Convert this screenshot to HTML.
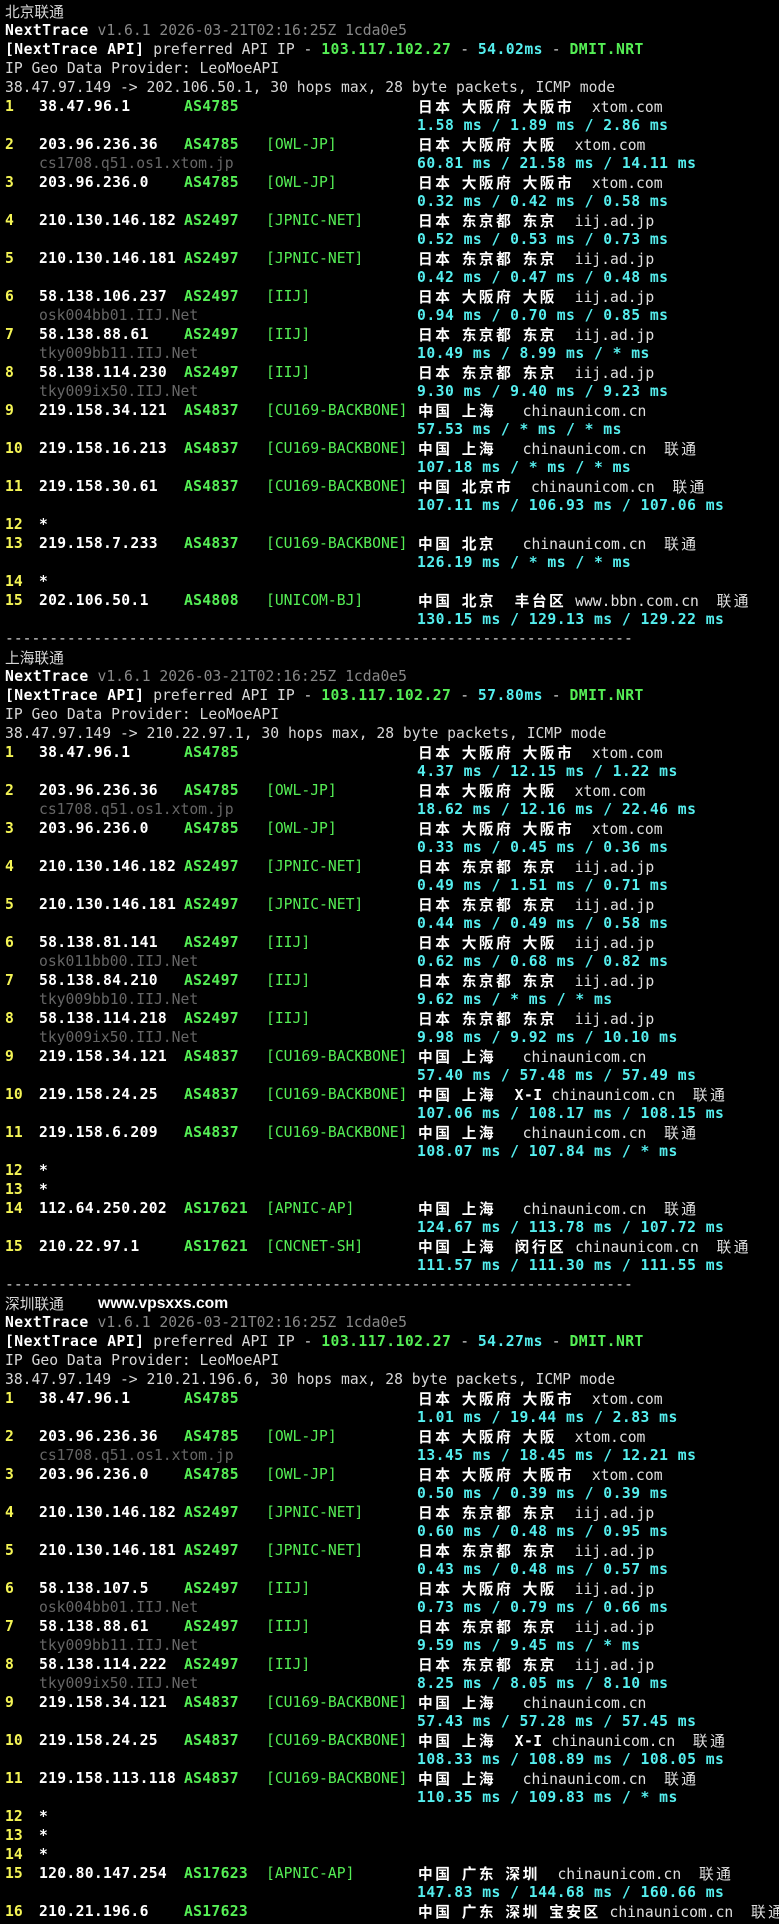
<!DOCTYPE html>
<html><head><meta charset="utf-8">
<style>
html,body{margin:0;padding:0;background:#000;}
#w{position:relative;width:779px;height:1924px;overflow:hidden;background:#000;padding-top:1.5px;box-sizing:border-box;
font-family:"DejaVu Sans Mono","Liberation Mono",monospace;font-size:14.7px;color:#d8d8d8;}
.l{position:relative;height:19px;line-height:19px;white-space:pre;}
.l span{position:absolute;top:0;white-space:pre;}
.x{left:5px;}
b{font-weight:bold;letter-spacing:.45px;color:#fff;}
i{font-style:normal;font-family:"Noto Sans CJK SC","WenQuanYi Zen Hei",sans-serif;letter-spacing:2.5px;}
.n{left:5px;color:#f4f455;font-weight:bold;}
.ip{left:39px;color:#fff;font-weight:bold;letter-spacing:.3px;}
.as{left:184px;color:#55ee55;font-weight:bold;letter-spacing:.3px;}
.t{left:266px;color:#55ee55;}
.r{left:418px;color:#e0e0e0;}
.m{left:417px;color:#55eeee;font-weight:bold;letter-spacing:.47px;}
.h{left:39px;color:#666;}
.g{color:#888;}
.gr{color:#55ee55;font-weight:bold;letter-spacing:.45px;}
.cy{color:#55eeee;font-weight:bold;letter-spacing:.45px;}
.ti{font-family:"Noto Sans CJK SC","WenQuanYi Zen Hei",sans-serif;color:#d8d8d8;}
.vp{font-family:"Liberation Sans",sans-serif;font-weight:bold;font-size:15.7px;color:#fff;}
</style></head><body><div id="w">

<div class="l"><span class="x ti">北京联通</span></div>
<div class="l"><span class="x"><b>NextTrace</b><span class="g" style="position:static"> v1.6.1 2026-03-21T02:16:25Z 1cda0e5</span></span></div>
<div class="l"><span class="x"><b>[NextTrace API]</b> preferred API IP - <span class="gr" style="position:static">103.117.102.27</span> - <span class="cy" style="position:static">54.02ms</span> - <span class="gr" style="position:static">DMIT.NRT</span></span></div>
<div class="l"><span class="x">IP Geo Data Provider: LeoMoeAPI</span></div>
<div class="l"><span class="x">38.47.97.149 -&gt; 202.106.50.1, 30 hops max, 28 byte packets, ICMP mode</span></div>
<div class="l"><span class="n">1</span><span class="ip">38.47.96.1</span><span class="as">AS4785</span><span class="r"><b><i>日本</i> <i>大阪府</i> <i>大阪市</i></b>  xtom.com</span></div>
<div class="l"><span class="m">1.58 ms / 1.89 ms / 2.86 ms</span></div>
<div class="l"><span class="n">2</span><span class="ip">203.96.236.36</span><span class="as">AS4785</span><span class="t">[OWL-JP]</span><span class="r"><b><i>日本</i> <i>大阪府</i> <i>大阪</i></b>  xtom.com</span></div>
<div class="l"><span class="h">cs1708.q51.os1.xtom.jp</span><span class="m">60.81 ms / 21.58 ms / 14.11 ms</span></div>
<div class="l"><span class="n">3</span><span class="ip">203.96.236.0</span><span class="as">AS4785</span><span class="t">[OWL-JP]</span><span class="r"><b><i>日本</i> <i>大阪府</i> <i>大阪市</i></b>  xtom.com</span></div>
<div class="l"><span class="m">0.32 ms / 0.42 ms / 0.58 ms</span></div>
<div class="l"><span class="n">4</span><span class="ip">210.130.146.182</span><span class="as">AS2497</span><span class="t">[JPNIC-NET]</span><span class="r"><b><i>日本</i> <i>东京都</i> <i>东京</i></b>  iij.ad.jp</span></div>
<div class="l"><span class="m">0.52 ms / 0.53 ms / 0.73 ms</span></div>
<div class="l"><span class="n">5</span><span class="ip">210.130.146.181</span><span class="as">AS2497</span><span class="t">[JPNIC-NET]</span><span class="r"><b><i>日本</i> <i>东京都</i> <i>东京</i></b>  iij.ad.jp</span></div>
<div class="l"><span class="m">0.42 ms / 0.47 ms / 0.48 ms</span></div>
<div class="l"><span class="n">6</span><span class="ip">58.138.106.237</span><span class="as">AS2497</span><span class="t">[IIJ]</span><span class="r"><b><i>日本</i> <i>大阪府</i> <i>大阪</i></b>  iij.ad.jp</span></div>
<div class="l"><span class="h">osk004bb01.IIJ.Net</span><span class="m">0.94 ms / 0.70 ms / 0.85 ms</span></div>
<div class="l"><span class="n">7</span><span class="ip">58.138.88.61</span><span class="as">AS2497</span><span class="t">[IIJ]</span><span class="r"><b><i>日本</i> <i>东京都</i> <i>东京</i></b>  iij.ad.jp</span></div>
<div class="l"><span class="h">tky009bb11.IIJ.Net</span><span class="m">10.49 ms / 8.99 ms / * ms</span></div>
<div class="l"><span class="n">8</span><span class="ip">58.138.114.230</span><span class="as">AS2497</span><span class="t">[IIJ]</span><span class="r"><b><i>日本</i> <i>东京都</i> <i>东京</i></b>  iij.ad.jp</span></div>
<div class="l"><span class="h">tky009ix50.IIJ.Net</span><span class="m">9.30 ms / 9.40 ms / 9.23 ms</span></div>
<div class="l"><span class="n">9</span><span class="ip">219.158.34.121</span><span class="as">AS4837</span><span class="t">[CU169-BACKBONE]</span><span class="r"><b><i>中国</i> <i>上海</i></b>   chinaunicom.cn</span></div>
<div class="l"><span class="m">57.53 ms / * ms / * ms</span></div>
<div class="l"><span class="n">10</span><span class="ip">219.158.16.213</span><span class="as">AS4837</span><span class="t">[CU169-BACKBONE]</span><span class="r"><b><i>中国</i> <i>上海</i></b>   chinaunicom.cn  <i>联通</i></span></div>
<div class="l"><span class="m">107.18 ms / * ms / * ms</span></div>
<div class="l"><span class="n">11</span><span class="ip">219.158.30.61</span><span class="as">AS4837</span><span class="t">[CU169-BACKBONE]</span><span class="r"><b><i>中国</i> <i>北京市</i></b>  chinaunicom.cn  <i>联通</i></span></div>
<div class="l"><span class="m">107.11 ms / 106.93 ms / 107.06 ms</span></div>
<div class="l"><span class="n">12</span><span class="ip">*</span></div>
<div class="l"><span class="n">13</span><span class="ip">219.158.7.233</span><span class="as">AS4837</span><span class="t">[CU169-BACKBONE]</span><span class="r"><b><i>中国</i> <i>北京</i></b>   chinaunicom.cn  <i>联通</i></span></div>
<div class="l"><span class="m">126.19 ms / * ms / * ms</span></div>
<div class="l"><span class="n">14</span><span class="ip">*</span></div>
<div class="l"><span class="n">15</span><span class="ip">202.106.50.1</span><span class="as">AS4808</span><span class="t">[UNICOM-BJ]</span><span class="r"><b><i>中国</i> <i>北京</i>  <i>丰台区</i></b> www.bbn.com.cn  <i>联通</i></span></div>
<div class="l"><span class="m">130.15 ms / 129.13 ms / 129.22 ms</span></div>
<div class="l"><span class="x">-----------------------------------------------------------------------</span></div>

<div class="l"><span class="x ti">上海联通</span></div>
<div class="l"><span class="x"><b>NextTrace</b><span class="g" style="position:static"> v1.6.1 2026-03-21T02:16:25Z 1cda0e5</span></span></div>
<div class="l"><span class="x"><b>[NextTrace API]</b> preferred API IP - <span class="gr" style="position:static">103.117.102.27</span> - <span class="cy" style="position:static">57.80ms</span> - <span class="gr" style="position:static">DMIT.NRT</span></span></div>
<div class="l"><span class="x">IP Geo Data Provider: LeoMoeAPI</span></div>
<div class="l"><span class="x">38.47.97.149 -&gt; 210.22.97.1, 30 hops max, 28 byte packets, ICMP mode</span></div>
<div class="l"><span class="n">1</span><span class="ip">38.47.96.1</span><span class="as">AS4785</span><span class="r"><b><i>日本</i> <i>大阪府</i> <i>大阪市</i></b>  xtom.com</span></div>
<div class="l"><span class="m">4.37 ms / 12.15 ms / 1.22 ms</span></div>
<div class="l"><span class="n">2</span><span class="ip">203.96.236.36</span><span class="as">AS4785</span><span class="t">[OWL-JP]</span><span class="r"><b><i>日本</i> <i>大阪府</i> <i>大阪</i></b>  xtom.com</span></div>
<div class="l"><span class="h">cs1708.q51.os1.xtom.jp</span><span class="m">18.62 ms / 12.16 ms / 22.46 ms</span></div>
<div class="l"><span class="n">3</span><span class="ip">203.96.236.0</span><span class="as">AS4785</span><span class="t">[OWL-JP]</span><span class="r"><b><i>日本</i> <i>大阪府</i> <i>大阪市</i></b>  xtom.com</span></div>
<div class="l"><span class="m">0.33 ms / 0.45 ms / 0.36 ms</span></div>
<div class="l"><span class="n">4</span><span class="ip">210.130.146.182</span><span class="as">AS2497</span><span class="t">[JPNIC-NET]</span><span class="r"><b><i>日本</i> <i>东京都</i> <i>东京</i></b>  iij.ad.jp</span></div>
<div class="l"><span class="m">0.49 ms / 1.51 ms / 0.71 ms</span></div>
<div class="l"><span class="n">5</span><span class="ip">210.130.146.181</span><span class="as">AS2497</span><span class="t">[JPNIC-NET]</span><span class="r"><b><i>日本</i> <i>东京都</i> <i>东京</i></b>  iij.ad.jp</span></div>
<div class="l"><span class="m">0.44 ms / 0.49 ms / 0.58 ms</span></div>
<div class="l"><span class="n">6</span><span class="ip">58.138.81.141</span><span class="as">AS2497</span><span class="t">[IIJ]</span><span class="r"><b><i>日本</i> <i>大阪府</i> <i>大阪</i></b>  iij.ad.jp</span></div>
<div class="l"><span class="h">osk011bb00.IIJ.Net</span><span class="m">0.62 ms / 0.68 ms / 0.82 ms</span></div>
<div class="l"><span class="n">7</span><span class="ip">58.138.84.210</span><span class="as">AS2497</span><span class="t">[IIJ]</span><span class="r"><b><i>日本</i> <i>东京都</i> <i>东京</i></b>  iij.ad.jp</span></div>
<div class="l"><span class="h">tky009bb10.IIJ.Net</span><span class="m">9.62 ms / * ms / * ms</span></div>
<div class="l"><span class="n">8</span><span class="ip">58.138.114.218</span><span class="as">AS2497</span><span class="t">[IIJ]</span><span class="r"><b><i>日本</i> <i>东京都</i> <i>东京</i></b>  iij.ad.jp</span></div>
<div class="l"><span class="h">tky009ix50.IIJ.Net</span><span class="m">9.98 ms / 9.92 ms / 10.10 ms</span></div>
<div class="l"><span class="n">9</span><span class="ip">219.158.34.121</span><span class="as">AS4837</span><span class="t">[CU169-BACKBONE]</span><span class="r"><b><i>中国</i> <i>上海</i></b>   chinaunicom.cn</span></div>
<div class="l"><span class="m">57.40 ms / 57.48 ms / 57.49 ms</span></div>
<div class="l"><span class="n">10</span><span class="ip">219.158.24.25</span><span class="as">AS4837</span><span class="t">[CU169-BACKBONE]</span><span class="r"><b><i>中国</i> <i>上海</i>  X-I</b> chinaunicom.cn  <i>联通</i></span></div>
<div class="l"><span class="m">107.06 ms / 108.17 ms / 108.15 ms</span></div>
<div class="l"><span class="n">11</span><span class="ip">219.158.6.209</span><span class="as">AS4837</span><span class="t">[CU169-BACKBONE]</span><span class="r"><b><i>中国</i> <i>上海</i></b>   chinaunicom.cn  <i>联通</i></span></div>
<div class="l"><span class="m">108.07 ms / 107.84 ms / * ms</span></div>
<div class="l"><span class="n">12</span><span class="ip">*</span></div>
<div class="l"><span class="n">13</span><span class="ip">*</span></div>
<div class="l"><span class="n">14</span><span class="ip">112.64.250.202</span><span class="as">AS17621</span><span class="t">[APNIC-AP]</span><span class="r"><b><i>中国</i> <i>上海</i></b>   chinaunicom.cn  <i>联通</i></span></div>
<div class="l"><span class="m">124.67 ms / 113.78 ms / 107.72 ms</span></div>
<div class="l"><span class="n">15</span><span class="ip">210.22.97.1</span><span class="as">AS17621</span><span class="t">[CNCNET-SH]</span><span class="r"><b><i>中国</i> <i>上海</i>  <i>闵行区</i></b> chinaunicom.cn  <i>联通</i></span></div>
<div class="l"><span class="m">111.57 ms / 111.30 ms / 111.55 ms</span></div>
<div class="l"><span class="x">-----------------------------------------------------------------------</span></div>

<div class="l"><span class="x ti">深圳联通</span><span class="vp" style="left:98px">www.vpsxxs.com</span></div>
<div class="l"><span class="x"><b>NextTrace</b><span class="g" style="position:static"> v1.6.1 2026-03-21T02:16:25Z 1cda0e5</span></span></div>
<div class="l"><span class="x"><b>[NextTrace API]</b> preferred API IP - <span class="gr" style="position:static">103.117.102.27</span> - <span class="cy" style="position:static">54.27ms</span> - <span class="gr" style="position:static">DMIT.NRT</span></span></div>
<div class="l"><span class="x">IP Geo Data Provider: LeoMoeAPI</span></div>
<div class="l"><span class="x">38.47.97.149 -&gt; 210.21.196.6, 30 hops max, 28 byte packets, ICMP mode</span></div>
<div class="l"><span class="n">1</span><span class="ip">38.47.96.1</span><span class="as">AS4785</span><span class="r"><b><i>日本</i> <i>大阪府</i> <i>大阪市</i></b>  xtom.com</span></div>
<div class="l"><span class="m">1.01 ms / 19.44 ms / 2.83 ms</span></div>
<div class="l"><span class="n">2</span><span class="ip">203.96.236.36</span><span class="as">AS4785</span><span class="t">[OWL-JP]</span><span class="r"><b><i>日本</i> <i>大阪府</i> <i>大阪</i></b>  xtom.com</span></div>
<div class="l"><span class="h">cs1708.q51.os1.xtom.jp</span><span class="m">13.45 ms / 18.45 ms / 12.21 ms</span></div>
<div class="l"><span class="n">3</span><span class="ip">203.96.236.0</span><span class="as">AS4785</span><span class="t">[OWL-JP]</span><span class="r"><b><i>日本</i> <i>大阪府</i> <i>大阪市</i></b>  xtom.com</span></div>
<div class="l"><span class="m">0.50 ms / 0.39 ms / 0.39 ms</span></div>
<div class="l"><span class="n">4</span><span class="ip">210.130.146.182</span><span class="as">AS2497</span><span class="t">[JPNIC-NET]</span><span class="r"><b><i>日本</i> <i>东京都</i> <i>东京</i></b>  iij.ad.jp</span></div>
<div class="l"><span class="m">0.60 ms / 0.48 ms / 0.95 ms</span></div>
<div class="l"><span class="n">5</span><span class="ip">210.130.146.181</span><span class="as">AS2497</span><span class="t">[JPNIC-NET]</span><span class="r"><b><i>日本</i> <i>东京都</i> <i>东京</i></b>  iij.ad.jp</span></div>
<div class="l"><span class="m">0.43 ms / 0.48 ms / 0.57 ms</span></div>
<div class="l"><span class="n">6</span><span class="ip">58.138.107.5</span><span class="as">AS2497</span><span class="t">[IIJ]</span><span class="r"><b><i>日本</i> <i>大阪府</i> <i>大阪</i></b>  iij.ad.jp</span></div>
<div class="l"><span class="h">osk004bb01.IIJ.Net</span><span class="m">0.73 ms / 0.79 ms / 0.66 ms</span></div>
<div class="l"><span class="n">7</span><span class="ip">58.138.88.61</span><span class="as">AS2497</span><span class="t">[IIJ]</span><span class="r"><b><i>日本</i> <i>东京都</i> <i>东京</i></b>  iij.ad.jp</span></div>
<div class="l"><span class="h">tky009bb11.IIJ.Net</span><span class="m">9.59 ms / 9.45 ms / * ms</span></div>
<div class="l"><span class="n">8</span><span class="ip">58.138.114.222</span><span class="as">AS2497</span><span class="t">[IIJ]</span><span class="r"><b><i>日本</i> <i>东京都</i> <i>东京</i></b>  iij.ad.jp</span></div>
<div class="l"><span class="h">tky009ix50.IIJ.Net</span><span class="m">8.25 ms / 8.05 ms / 8.10 ms</span></div>
<div class="l"><span class="n">9</span><span class="ip">219.158.34.121</span><span class="as">AS4837</span><span class="t">[CU169-BACKBONE]</span><span class="r"><b><i>中国</i> <i>上海</i></b>   chinaunicom.cn</span></div>
<div class="l"><span class="m">57.43 ms / 57.28 ms / 57.45 ms</span></div>
<div class="l"><span class="n">10</span><span class="ip">219.158.24.25</span><span class="as">AS4837</span><span class="t">[CU169-BACKBONE]</span><span class="r"><b><i>中国</i> <i>上海</i>  X-I</b> chinaunicom.cn  <i>联通</i></span></div>
<div class="l"><span class="m">108.33 ms / 108.89 ms / 108.05 ms</span></div>
<div class="l"><span class="n">11</span><span class="ip">219.158.113.118</span><span class="as">AS4837</span><span class="t">[CU169-BACKBONE]</span><span class="r"><b><i>中国</i> <i>上海</i></b>   chinaunicom.cn  <i>联通</i></span></div>
<div class="l"><span class="m">110.35 ms / 109.83 ms / * ms</span></div>
<div class="l"><span class="n">12</span><span class="ip">*</span></div>
<div class="l"><span class="n">13</span><span class="ip">*</span></div>
<div class="l"><span class="n">14</span><span class="ip">*</span></div>
<div class="l"><span class="n">15</span><span class="ip">120.80.147.254</span><span class="as">AS17623</span><span class="t">[APNIC-AP]</span><span class="r"><b><i>中国</i> <i>广东</i> <i>深圳</i></b>  chinaunicom.cn  <i>联通</i></span></div>
<div class="l"><span class="m">147.83 ms / 144.68 ms / 160.66 ms</span></div>
<div class="l"><span class="n">16</span><span class="ip">210.21.196.6</span><span class="as">AS17623</span><span class="r"><b><i>中国</i> <i>广东</i> <i>深圳</i> <i>宝安区</i></b> chinaunicom.cn  <i>联通</i></span></div>

</div></body></html>
